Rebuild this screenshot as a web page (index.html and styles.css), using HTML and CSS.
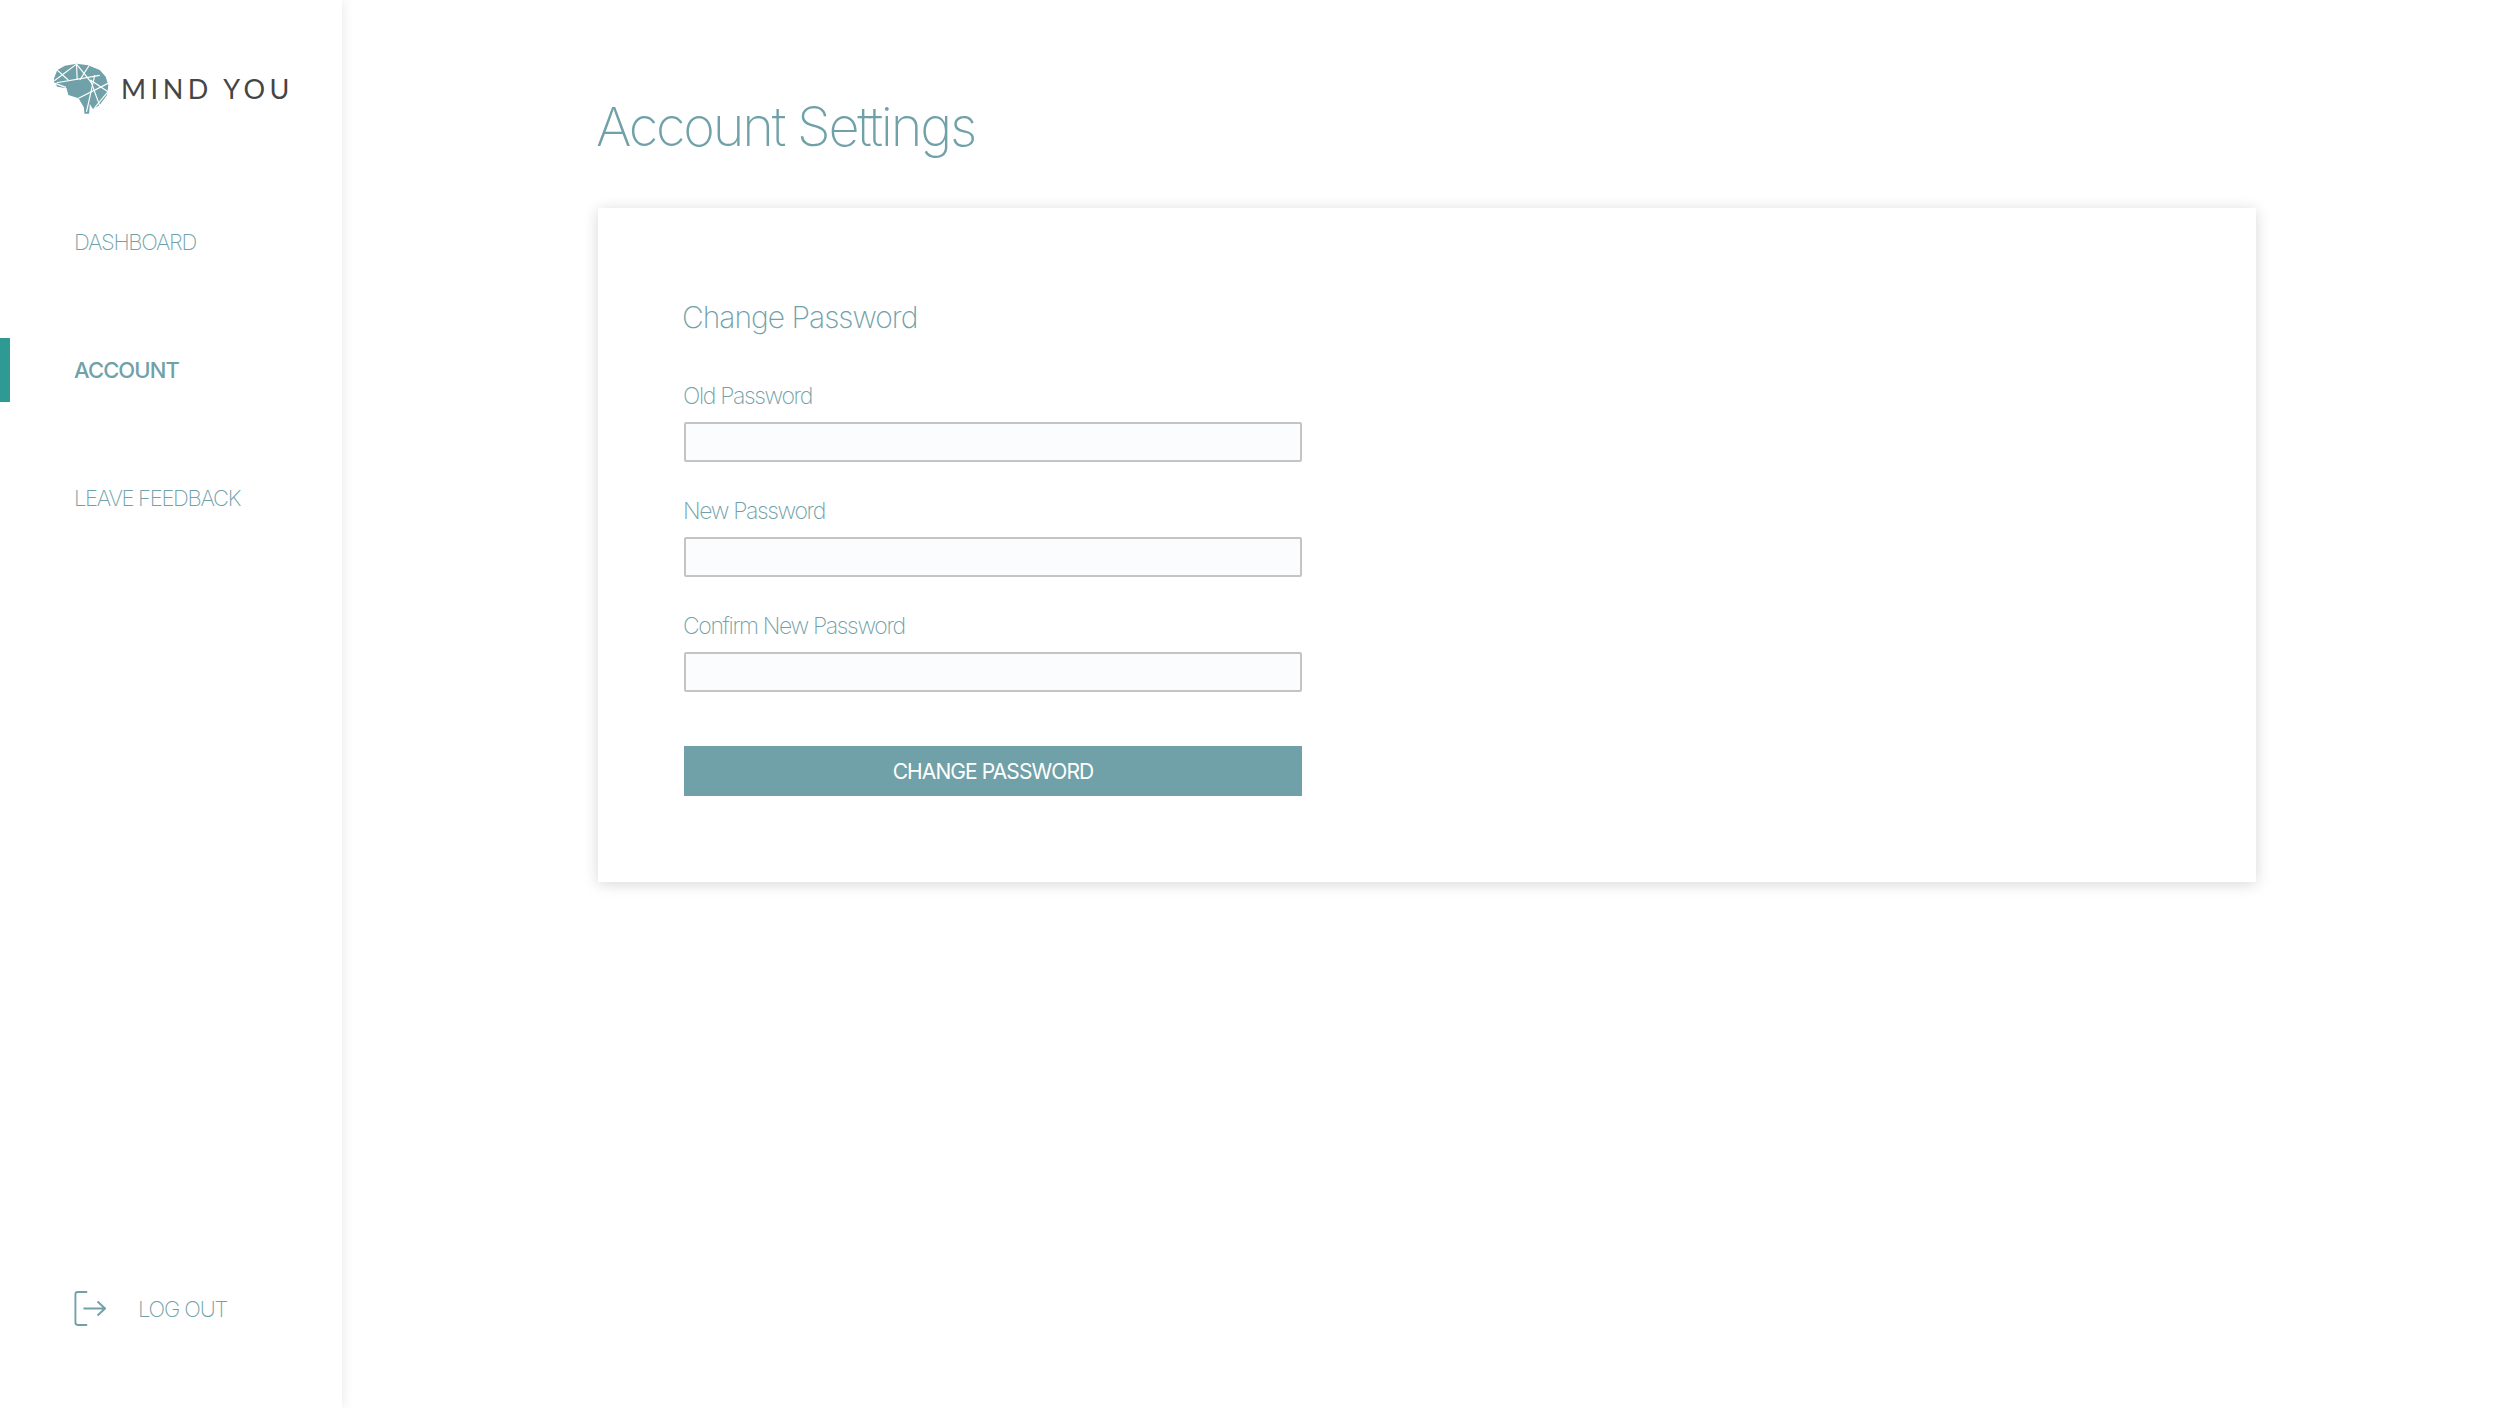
FILE: index.html
```html
<!DOCTYPE html>
<html lang="en">
<head>
  <meta charset="UTF-8" />
  <title>Mind You – Account Settings</title>
  <link rel="stylesheet" href="styles.css">
</head>
<body>

  <!-- Sidebar -->
  <aside class="sidebar">
    <div class="logo">
      <svg class="logo-mark" viewBox="162 99 166 153">
        <path d="M162 145 L172 120 L195 107 L230 101 L265 105 L300 120 L318 140 L326 165 L322 195 L300 225 L280 238 L270 222 L268 252 L254 252 L252 232 L236 205 L205 195 L200 175 L172 170 L162 155 Z" fill="#71a1a8" />
        <g stroke="#fff" stroke-width="3.5" fill="none">
          <line x1="163" y1="152" x2="230" y2="102" />
          <line x1="172" y1="120" x2="205" y2="150" />
          <line x1="230" y1="102" x2="275" y2="158" />
          <line x1="268" y1="106" x2="240" y2="150" />
          <line x1="170" y1="158" x2="300" y2="136" />
          <line x1="165" y1="160" x2="198" y2="172" />
          <line x1="325" y1="185" x2="272" y2="150" />
          <line x1="285" y1="135" x2="260" y2="246" />
          <line x1="272" y1="150" x2="300" y2="228" />
          <line x1="236" y1="205" x2="325" y2="160" />
          <line x1="282" y1="237" x2="325" y2="185" />
          <line x1="230" y1="102" x2="232" y2="150" />
        </g>
      </svg>
      <span class="logo-text">MIND YOU</span>
    </div>

    <nav class="nav">
      <a class="nav-item" href="#">DASHBOARD</a>
      <a class="nav-item active" href="#">ACCOUNT</a>
      <a class="nav-item" href="#">LEAVE FEEDBACK</a>
    </nav>

    <a class="logout" href="#">
      <svg class="logout-icon" viewBox="0 0 34 38">
        <path d="M14 1.5 H4 Q1.5 1.5 1.5 4 V34 Q1.5 36.5 4 36.5 H14" />
        <path d="M10 19 H33 M25 11.5 L33 19 L25 26.5" />
      </svg>
      <span>LOG OUT</span>
    </a>
  </aside>

  <!-- Content -->
  <main class="content">
    <h1 class="title">Account Settings</h1>

    <section class="card">
      <h2 class="card-title">Change Password</h2>
      <form class="form">
        <label class="field">Old Password <input type="password"></label>
        <label class="field">New Password <input type="password"></label>
        <label class="field">Confirm New Password <input type="password"></label>
        <button class="submit" type="button">CHANGE PASSWORD</button>
      </form>
    </section>
  </main>

</body>
</html>
```

FILE: styles.css
```css
* {
  box-sizing: border-box;
}
html, body {
  height: 100%;
}
body {
  margin: 0;
  display: flex;
  background: #fff;
  color: #71a1a8;
  font-family: 'Inter', 'Liberation Sans', sans-serif;
  font-weight: 300;
  overflow: hidden;
}
a {
  color: inherit;
  text-decoration: none;
}

.sidebar {
  width: 342px;
  height: 100%;
  flex-shrink: 0;
  display: flex;
  flex-direction: column;
  background: #fff;
  box-shadow: 0 0 12px rgba(0, 0, 0, 0.1);
}
.logo {
  height: 210px;
  padding: 63px 0 0 54px;
  display: flex;
  align-items: flex-start;
  gap: 12px;
}
.logo-mark {
  width: 55px;
  height: 51px;
}
.logo-text {
  margin-top: 10px;
  font-family: 'Lato', sans-serif;
  font-weight: 400;
  font-size: 27px;
  line-height: 32px;
  letter-spacing: 4.5px;
  color: #454545;
  white-space: nowrap;
}
.nav {
  display: flex;
  flex-direction: column;
  gap: 64px;
}
.nav-item {
  height: 64px;
  padding-left: 74px;
  display: flex;
  align-items: center;
  font-size: 22px;
  font-weight: 250;
  letter-spacing: -1.3px;
}
.nav-item.active {
  font-weight: 500;
  letter-spacing: -0.9px;
  border-left: 10px solid #2f9a93;
  padding-left: 64px;
}
.logout {
  margin-top: auto;
  margin-bottom: 81px;
  padding-left: 74px;
  display: flex;
  align-items: center;
  gap: 32px;
  font-size: 22px;
  font-weight: 250;
  letter-spacing: -1.15px;
}
.logout-icon {
  width: 32px;
  height: 37px;
  fill: none;
  stroke: #71a1a8;
  stroke-width: 2;
}

.content {
  flex: 1;
  padding: 95px 0 0 256px;
}
.title {
  margin: 0 0 49px -2px;
  font-size: 54px;
  line-height: 64px;
  font-weight: 250;
  letter-spacing: -2.2px;
}
.card {
  width: 1658px;
  height: 674px;
  padding: 89px 0 0 85px;
  background: #fff;
  box-shadow: 0 2px 14px rgba(0, 0, 0, 0.16);
}
.card-title {
  margin: 0 0 43px -1px;
  font-size: 30px;
  line-height: 40px;
  font-weight: 250;
  letter-spacing: -1px;
}
.field {
  display: block;
  height: 115px;
  font-size: 23px;
  font-weight: 250;
  line-height: 32px;
  letter-spacing: -1.35px;
}
.field input {
  display: block;
  width: 618px;
  height: 40px;
  margin: 10px 0 0 1px;
  background: #fbfcfd;
  border: 2px solid #c4c4c4;
  border-radius: 2px;
}
.submit {
  display: block;
  width: 618px;
  height: 50px;
  margin: 21px 0 0 1px;
  border: none;
  background: #71a1a8;
  color: #fff;
  font-family: inherit;
  font-size: 21px;
  font-weight: 400;
  letter-spacing: -0.9px;
}
```
